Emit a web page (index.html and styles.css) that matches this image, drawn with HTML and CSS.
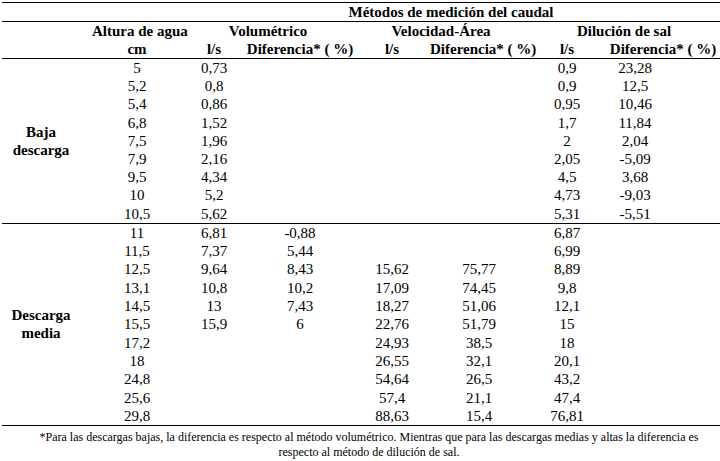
FILE: index.html
```html
<!DOCTYPE html>
<html lang="es">
<head>
<meta charset="utf-8">
<title>Métodos de medición del caudal</title>
<link rel="stylesheet" href="styles.css">
</head>
<body>
<div class="page">
<table class="flow">
  <colgroup>
    <col class="c-label"><col class="c-alt"><col class="c-vls"><col class="c-vdif"><col class="c-sls"><col class="c-sdif"><col class="c-dls"><col class="c-ddif">
  </colgroup>
  <thead>
    <tr class="h1">
      <th></th><th></th>
      <th colspan="6" class="g-metodos">Métodos de medición del caudal</th>
    </tr>
    <tr class="h2">
      <th></th>
      <th>Altura de agua</th>
      <th colspan="2" class="g-vol">Volumétrico</th>
      <th colspan="2" class="g-vel">Velocidad-Área</th>
      <th colspan="2" class="g-dil">Dilución de sal</th>
    </tr>
    <tr class="h3">
      <th></th>
      <th>cm</th>
      <th class="s-vls">l/s</th>
      <th class="s-vdif">Diferencia* ( %)</th>
      <th class="s-sls">l/s</th>
      <th>Diferencia* ( %)</th>
      <th>l/s</th>
      <th class="s-ddif">Diferencia* ( %)</th>
    </tr>
  </thead>
  <tbody class="grp">
    <tr><th rowspan="9" class="label">Baja<br>descarga</th><td>5</td><td>0,73</td><td></td><td></td><td></td><td>0,9</td><td class="ddif">23,28</td></tr>
    <tr><td>5,2</td><td>0,8</td><td></td><td></td><td></td><td>0,9</td><td class="ddif">12,5</td></tr>
    <tr><td>5,4</td><td>0,86</td><td></td><td></td><td></td><td>0,95</td><td class="ddif">10,46</td></tr>
    <tr><td>6,8</td><td>1,52</td><td></td><td></td><td></td><td>1,7</td><td class="ddif">11,84</td></tr>
    <tr><td>7,5</td><td>1,96</td><td></td><td></td><td></td><td>2</td><td class="ddif">2,04</td></tr>
    <tr><td>7,9</td><td>2,16</td><td></td><td></td><td></td><td>2,05</td><td class="ddif">-5,09</td></tr>
    <tr><td>9,5</td><td>4,34</td><td></td><td></td><td></td><td>4,5</td><td class="ddif">3,68</td></tr>
    <tr><td>10</td><td>5,2</td><td></td><td></td><td></td><td>4,73</td><td class="ddif">-9,03</td></tr>
    <tr><td>10,5</td><td>5,62</td><td></td><td></td><td></td><td>5,31</td><td class="ddif">-5,51</td></tr>
  </tbody>
  <tbody class="grp grp-last">
    <tr><th rowspan="11" class="label">Descarga<br>media</th><td>11</td><td>6,81</td><td>-0,88</td><td></td><td></td><td>6,87</td><td></td></tr>
    <tr><td>11,5</td><td>7,37</td><td>5,44</td><td></td><td></td><td>6,99</td><td></td></tr>
    <tr><td>12,5</td><td>9,64</td><td>8,43</td><td>15,62</td><td>75,77</td><td>8,89</td><td></td></tr>
    <tr><td>13,1</td><td>10,8</td><td>10,2</td><td>17,09</td><td>74,45</td><td>9,8</td><td></td></tr>
    <tr><td>14,5</td><td>13</td><td>7,43</td><td>18,27</td><td>51,06</td><td>12,1</td><td></td></tr>
    <tr><td>15,5</td><td>15,9</td><td>6</td><td>22,76</td><td>51,79</td><td>15</td><td></td></tr>
    <tr><td>17,2</td><td></td><td></td><td>24,93</td><td>38,5</td><td>18</td><td></td></tr>
    <tr><td>18</td><td></td><td></td><td>26,55</td><td>32,1</td><td>20,1</td><td></td></tr>
    <tr><td>24,8</td><td></td><td></td><td>54,64</td><td>26,5</td><td>43,2</td><td></td></tr>
    <tr><td>25,6</td><td></td><td></td><td>57,4</td><td>21,1</td><td>47,4</td><td></td></tr>
    <tr><td>29,8</td><td></td><td></td><td>88,63</td><td>15,4</td><td>76,81</td><td></td></tr>
  </tbody>
</table>
<p class="note">*Para las descargas bajas, la diferencia es respecto al método volumétrico. Mientras que para las descargas medias y altas la diferencia es<br>respecto al método de dilución de sal.</p>
</div>
</body>
</html>
```

FILE: styles.css
```css
html, body {
  margin: 0;
  padding: 0;
  background: #ffffff;
}

.page {
  padding: 2px 0 0 2px;
  font-family: "Liberation Serif", "Times New Roman", serif;
  color: #000000;
}

.flow {
  border-collapse: collapse;
  table-layout: fixed;
  width: 718px;
  font-family: "Liberation Serif", "Times New Roman", serif;
  font-size: 15px;
  border-top: 1px solid #000;
}

.c-label { width: 90px; }
.c-alt { width: 90px; }
.c-vls { width: 64px; }
.c-vdif { width: 108px; }
.c-sls { width: 76px; }
.c-sdif { width: 98px; }
.c-dls { width: 78px; }
.c-ddif { width: 114px; }

.flow th,
.flow td {
  padding: 0;
  text-align: center;
  white-space: nowrap;
  line-height: 18px;
  font-weight: normal;
}

.flow thead th {
  font-weight: bold;
}

.h1 th {
  height: 18px;
  border-bottom: 1px solid #000;
}

.h2 th,
.h3 th {
  height: 18px;
}

.h3 th {
  border-bottom: 1px solid #000;
}

.g-metodos { padding-left: 14px; }
.g-vol { padding-left: 24px; }
.g-vel { padding-left: 22px; }
.g-dil { padding-left: 12px; }

.s-vls { padding-left: 8px; }
.s-vdif { padding-left: 6px; }
.s-sls { padding-left: 16px; }
.s-ddif { padding-right: 26px; }

.grp td {
  height: 18.2px;
}

.grp-last td {
  height: 18.3px;
}

.grp {
  border-bottom: 1px solid #000;
}

.flow .label {
  font-weight: bold;
  padding-right: 12px;
  vertical-align: middle;
}

.flow .ddif {
  padding-right: 56px;
}

.note {
  margin: 0;
  padding: 4px 0 0 16px;
  width: 702px;
  text-align: center;
  font-family: "Liberation Serif", "Times New Roman", serif;
  font-size: 12px;
  line-height: 15px;
}
```
